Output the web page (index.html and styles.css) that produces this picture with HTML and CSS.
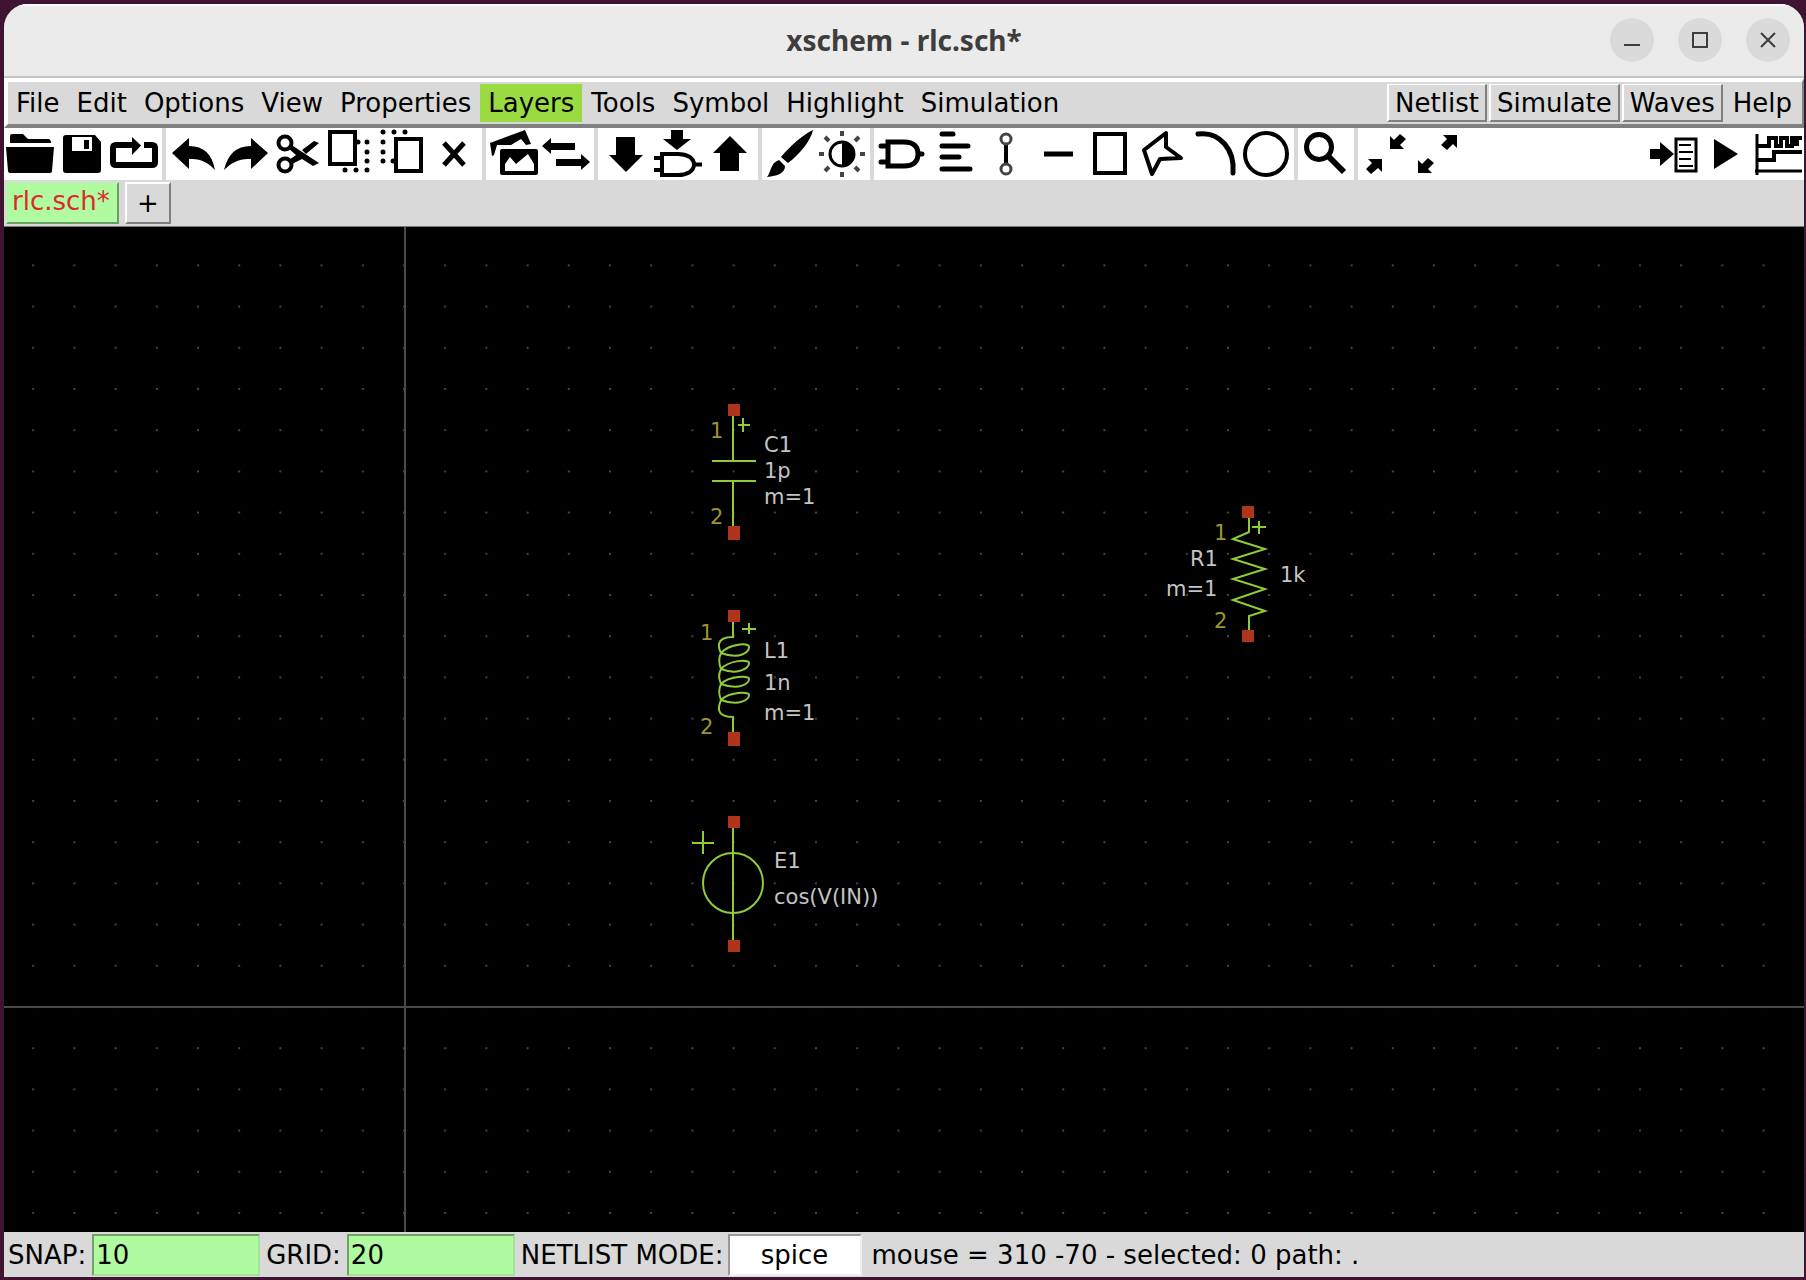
FILE: index.html
```html
<!DOCTYPE html>
<html lang="en">
<head>
<meta charset="utf-8">
<title>xschem - rlc.sch*</title>
<link rel="stylesheet" href="styles.css">
</head>
<body>
<div class="window">
  <header class="titlebar">
    <h1 class="title">xschem - rlc.sch*</h1>
    <div class="window-controls">
      <button class="wm" aria-label="Minimize"><svg viewBox="0 0 44 44"><path d="M14 27H30"/></svg></button>
      <button class="wm" aria-label="Maximize"><svg viewBox="0 0 44 44"><rect x="15" y="15" width="14" height="14"/></svg></button>
      <button class="wm" aria-label="Close"><svg viewBox="0 0 44 44"><path d="M15 15L29 29M29 15L15 29"/></svg></button>
    </div>
  </header>

  <nav class="menubar">
    <button class="menu">File</button>
    <button class="menu">Edit</button>
    <button class="menu">Options</button>
    <button class="menu">View</button>
    <button class="menu">Properties</button>
    <button class="menu active">Layers</button>
    <button class="menu">Tools</button>
    <button class="menu">Symbol</button>
    <button class="menu">Highlight</button>
    <button class="menu">Simulation</button>
    <div class="actions">
      <button class="menu raised">Netlist</button>
      <button class="menu raised">Simulate</button>
      <button class="menu raised">Waves</button>
      <button class="menu">Help</button>
    </div>
  </nav>

  <div class="toolbar">
    <div class="group">
      <button class="tool" aria-label="Open"><svg viewBox="0 0 52 52"><path class="f" d="M6 8q0-2 2-2h11l5 5h20q3 0 3 4H6zM2 19H50L48 43q0 2-2 2H6q-2 0-2-2z"/></svg></button>
      <button class="tool" aria-label="Save"><svg viewBox="0 0 52 52"><path class="f" fill-rule="evenodd" d="M10 7H39L45 14V42q0 3-3 3H10q-3 0-3-3V10q0-3 3-3zM16 9V23H36V9zM28 12h5v9h-5z"/></svg></button>
      <button class="tool" aria-label="Reload"><svg viewBox="0 0 52 52"><path class="s w6" d="M26 17H8q-3 0-3 3v14q0 3 3 3h36q3 0 3-3V20q0-3-3-3h-8"/><path class="f" d="M24 9L33 17.500 24 27z"/></svg></button>
    </div>
    <div class="group">
      <button class="tool" aria-label="Undo"><svg viewBox="0 0 52 52"><path class="f" d="M4 25L21 10V18C36 18 44 26 47 42 38 32 30 31 21 31V41z"/></svg></button>
      <button class="tool" aria-label="Redo"><svg viewBox="0 0 52 52"><path class="f" d="M48 25L31 10V18C16 18 8 26 4 42 14 32 22 31 31 31V41z"/></svg></button>
      <button class="tool" aria-label="Cut"><svg viewBox="0 0 52 52"><circle class="s w4" cx="13" cy="15" r="6.500"/><circle class="s w4" cx="13" cy="37" r="6.500"/><path class="f" d="M18 16L47 35 41 38 30 31 18 37 17 32 24 27 16 20zM30 22L42 13 47 15 34 26z"/></svg></button>
      <button class="tool" aria-label="Copy"><svg viewBox="0 0 52 52"><rect class="s w4" x="6" y="4" width="25" height="32"/><path class="dots" d="M34 14h0M43 14h0M43 24h0M43 33h0M43 42h0M32 42h0M21 42h0"/></svg></button>
      <button class="tool" aria-label="Paste"><svg viewBox="0 0 52 52"><rect class="s w4" x="20" y="11" width="25" height="32"/><path class="dots" d="M17 33h0M7 4h0M18 4h0M29 4h0M7 14h0M7 24h0M7 33h0"/></svg></button>
      <button class="tool" aria-label="Delete"><svg viewBox="0 0 52 52"><path class="s w5" d="M16 15L36 37M36 15L16 37"/></svg></button>
    </div>
    <div class="group">
      <button class="tool" aria-label="Merge images"><svg viewBox="0 0 52 52"><path class="f" fill-rule="evenodd" d="M2 15L37 2 43 16 38 17 33 11 23 17H9L6 27 4 28zM14 21H48q2 0 2 2V45q0 2-2 2H14q-2 0-2-2V23q0-2 2-2zM17 43H46V36L40 26 28 36 22 29 17 36z"/></svg></button>
      <button class="tool" aria-label="Swap"><svg viewBox="0 0 52 52"><path class="f" d="M2 18L11 10V15H35V22H11V26zM50 34L41 26V31H16V38H41V42z"/></svg></button>
    </div>
    <div class="group">
      <button class="tool" aria-label="Descend"><svg viewBox="0 0 52 52"><path class="f" d="M16 9H35V27H43L26 44 9 27H16z"/></svg></button>
      <button class="tool" aria-label="Insert symbol"><svg viewBox="0 0 52 52"><path class="f" d="M19 2H31V11H39L25 22 11 11H19z"/><path class="s w4" d="M10 26H26C35 26 42 30 42 36.500S35 47 26 47H10zM2 30H10M2 42H10M42 36.500H50"/></svg></button>
      <button class="tool" aria-label="Ascend"><svg viewBox="0 0 52 52"><path class="f" d="M16 43H35V25H43L26 8 9 25H16z"/></svg></button>
    </div>
    <div class="group">
      <button class="tool" aria-label="Highlight net"><svg viewBox="0 0 52 52"><path class="f" d="M49 2C47 12 36 26 24 35L17 29C27 17 40 6 49 2zM15 32L21 38C21 45 14 48 3 49 7 45 6 35 15 32z"/></svg></button>
      <button class="tool" aria-label="Toggle colour scheme"><svg viewBox="0 0 52 52"><circle class="s w3" cx="26" cy="26" r="12"/><path class="f" d="M26 14a12 12 0 0 1 0 24z"/><path class="s w4 gray" d="M26 3V8M26 44V49M3 26H8M44 26H49M9 9L13 13M39 39L43 43M43 9L39 13M9 43L13 39"/></svg></button>
    </div>
    <div class="group">
      <button class="tool" aria-label="Place symbol"><svg viewBox="0 0 52 52"><path class="s w5" d="M12 14H28C38 14 42 19 42 26S38 38 28 38H12zM5 18H10M5 34H10M43 26H46" stroke-linecap="round"/></svg></button>
      <button class="tool" aria-label="Place text"><svg viewBox="0 0 52 52"><path class="s w5" d="M14 6H25M14 18H40M14 29H31M14 41H42" stroke-linecap="round"/></svg></button>
      <button class="tool" aria-label="Draw wire"><svg viewBox="0 0 52 52"><path class="s w4" d="M26 16V36"/><circle class="s w3 gray" cx="26" cy="11" r="5"/><circle class="s w3 gray" cx="26" cy="41" r="5"/></svg></button>
      <button class="tool" aria-label="Draw line"><svg viewBox="0 0 52 52"><path class="s w5" d="M12 26H41"/></svg></button>
      <button class="tool" aria-label="Draw rectangle"><svg viewBox="0 0 52 52"><rect class="s w4" x="11" y="6" width="30" height="39"/></svg></button>
      <button class="tool" aria-label="Draw polygon"><svg viewBox="0 0 52 52"><path class="s w4" stroke-linejoin="round" d="M30 5L8 22 16 46 24 31 45 30 30 19z"/></svg></button>
      <button class="tool" aria-label="Draw arc"><svg viewBox="0 0 52 52"><path class="s w5" stroke-linecap="round" d="M10 6C32 3 47 22 45 45"/></svg></button>
      <button class="tool" aria-label="Draw circle"><svg viewBox="0 0 52 52"><circle class="s w4" cx="26" cy="26" r="21"/></svg></button>
    </div>
    <div class="group">
      <button class="tool" aria-label="Zoom box"><svg viewBox="0 0 52 52"><circle class="s w5" cx="19" cy="19" r="12.500"/><path class="s w6" d="M28 28L44 44"/></svg></button>
    </div>
    <div class="group">
      <button class="tool" aria-label="Zoom out"><svg viewBox="0 0 52 52"><path class="f" d="M30 21V8L34 12 40 6 46 11 40 17 44 21zM22 31V44L18 40 11 46 6 41 12 35 8 31z"/></svg></button>
      <button class="tool" aria-label="Zoom full"><svg viewBox="0 0 52 52"><path class="f" d="M45 7V20L41 16 35 22 29 17 35 11 31 7zM6 45V32L10 36 16 30 22 35 16 41 20 45z"/></svg></button>
    </div>
    <div class="group end">
      <button class="tool" aria-label="Netlist"><svg viewBox="0 0 52 52"><path class="f" d="M2 21H12V14L26 26 12 38V31H2z"/><rect class="s w3" x="28" y="11" width="20" height="32"/><path class="s w2" d="M31 17H43M31 24H45M31 31H43M31 38H45"/></svg></button>
      <button class="tool" aria-label="Simulate"><svg viewBox="0 0 52 52"><path class="f" d="M14 11L38 26 14 41z"/></svg></button>
      <button class="tool" aria-label="Waves"><svg viewBox="0 0 52 52"><path class="s w3" d="M5 6V47M3 43H50"/><path class="s w4" d="M5 18H17V10H24V18H29V10H35V18H40V10H45V18M44 18V10H50M5 32H22V24H50"/></svg></button>
    </div>
  </div>

  <div class="tabs">
    <button class="tab current">rlc.sch*</button>
    <button class="tab add">+</button>
  </div>

  <main class="canvas">
    <svg class="schematic" role="img" aria-label="Schematic rlc.sch">
      <defs>
        <pattern id="grid" x="399" y="779" width="41.200" height="41.200" patternUnits="userSpaceOnUse">
          <rect width="2" height="2" fill="#444"/>
        </pattern>
      </defs>
      <rect width="100%" height="100%" fill="url(#grid)"/>
      <path class="axis" d="M401 0V4000M0 780H9000"/>

      <g transform="translate(730 183)">
        <path class="sym" d="M-1 6V51M-22 51H22M-22 71H22M-1 71V116M4 15H16M9 8V22"/>
        <rect class="pin" x="-6" y="-6" width="12" height="12"/><rect class="pin" x="-6" y="116" width="12" height="14"/>
        <text class="num" x="-24" y="28">1</text><text class="num" x="-24" y="114">2</text>
        <text x="30" y="42">C1</text><text x="30" y="68">1p</text><text x="30" y="94">m=1</text>
      </g>

      <g transform="translate(730 389)">
        <path class="sym" d="M-1 6V21C-20 21-15 33-13 37M-13 37C-5 28 15 26 15 31S6 44-13 37M-13 37C-16 43-15 48-13 53M-13 53C-5 44 15 43 15 47S6 60-13 53M-13 53C-16 59-15 63-13 68M-13 68C-5 60 15 59 15 63S6 75-13 68M-13 68C-16 74-15 79-13 84M-13 84C-5 76 15 75 15 79S6 91-13 84M-13 84C-15 89-20 101-1 101V116M8 13H22M15 7V18"/>
        <rect class="pin" x="-6" y="-6" width="12" height="12"/><rect class="pin" x="-6" y="116" width="12" height="14"/>
        <text class="num" x="-34" y="24">1</text><text class="num" x="-34" y="118">2</text>
        <text x="30" y="42">L1</text><text x="30" y="74">1n</text><text x="30" y="104">m=1</text>
      </g>

      <g transform="translate(730 595)">
        <path class="sym" d="M-1 6V118M-42 21H-20M-31 9V32"/><circle class="sym" cx="-1" cy="61" r="30"/>
        <rect class="pin" x="-6" y="-6" width="12" height="12"/><rect class="pin" x="-6" y="118" width="12" height="12"/>
        <text x="40" y="46">E1</text><text x="40" y="82">cos(V(IN))</text>
      </g>

      <g transform="translate(1244 285)">
        <path class="sym" d="M1 6V20L-15 27 17 37-15 47 17 57-15 67 17 77-15 88 17 99 1 104V118M4 15H18M11 9V22"/>
        <rect class="pin" x="-6" y="-6" width="12" height="12"/><rect class="pin" x="-6" y="118" width="12" height="12"/>
        <text class="num" x="-34" y="28">1</text><text class="num" x="-34" y="116">2</text>
        <text x="-58" y="54">R1</text><text x="-82" y="84">m=1</text><text x="32" y="70">1k</text>
      </g>
    </svg>
  </main>

  <footer class="status">
    <label for="snap">SNAP:</label><input id="snap" class="entry" type="text" value="10">
    <label for="gridsize">GRID:</label><input id="gridsize" class="entry" type="text" value="20">
    <label for="mode">NETLIST MODE:</label><input id="mode" class="entry mode" type="text" value="spice">
    <output class="info">mouse = 310 -70 - selected: 0 path: .</output>
  </footer>
</div>
</body>
</html>
```
FILE: styles.css
```css
* { box-sizing: border-box; }

body {
  margin: 0;
  min-height: 100vh;
  display: flex;
  padding: 4px 2px 3px 4px;
  background: #3e1430;
  font-family: "DejaVu Sans", sans-serif;
  font-size: 26px;
  color: #000;
}

button, input {
  margin: 0;
  padding: 0;
  border: 0;
  border-radius: 0;
  background: none;
  font: inherit;
  color: inherit;
}

svg { display: block; }

.window {
  flex: 1;
  min-width: 0;
  display: flex;
  flex-direction: column;
  background: #d9d9d9;
  border-radius: 24px 24px 0 0;
  overflow: hidden;
}

/* Title bar */
.titlebar {
  display: grid;
  grid-template-columns: 1fr auto 1fr;
  align-items: center;
  height: 74px;
  padding-bottom: 2px;
  background: #ebebeb;
  border-top: 2px solid #fafafa;
  border-bottom: 2px solid #c4c4c4;
}

.title {
  grid-column: 2;
  margin: 0;
  font: bold 28px/36px "Noto Sans", "Open Sans", sans-serif;
  color: #3d3d3d;
}

.window-controls {
  display: flex;
  justify-content: flex-end;
  gap: 24px;
  padding-right: 14px;
}

.wm {
  width: 44px;
  height: 44px;
  border-radius: 50%;
  background: #dadada;
}

.wm path, .wm rect { fill: none; stroke: #3d3d3d; stroke-width: 2; }

/* Menu bar */
.menubar {
  display: flex;
  gap: 1px;
  height: 50px;
  padding: 2px 2px 1px 0;
  border: solid;
  border-width: 4px 2px 4px 4px;
  border-color: #fff #808080 #808080 #fff;
}

.menu {
  height: 38px;
  padding: 0 8px;
  line-height: 36px;
  white-space: nowrap;
}

.menu.active { background: #9adb41; }

.actions { display: flex; gap: 2px; margin-left: auto; }

.menu.raised {
  padding: 0 6px;
  border: 2px solid;
  border-color: #fff #808080 #808080 #fff;
  border-top-width: 1px;
  line-height: 34px;
}

/* Toolbar */
.toolbar { display: flex; background: #fff; }

.group { display: flex; }

.group + .group:not(.end)::before {
  content: "";
  width: 4px;
  margin: 0 2px;
  background: #d9d9d9;
}

.group.end { margin-left: auto; }

.tool { width: 52px; height: 52px; }

.f { fill: #000; }
.s { fill: none; stroke: #000; }
.s.gray { stroke: #444; }
.w2 { stroke-width: 2; }
.w3 { stroke-width: 3; }
.w4 { stroke-width: 4; }
.w5 { stroke-width: 5; }
.w6 { stroke-width: 6; }
.dots { stroke: #000; stroke-width: 5; stroke-linecap: round; }

/* Tabs */
.tabs {
  display: flex;
  gap: 6px;
  height: 46px;
  padding: 2px;
}

.tab {
  height: 42px;
  padding: 0 9px;
  border: 2px solid;
  border-color: #fff #808080 #808080 #fff;
  line-height: 34px;
}

.tab.current {
  padding: 0 7px 4px 4px;
  background: #b0faa0;
  border-color: #b8f5ac #6e9c65 #6e9c65 #b8f5ac;
  color: #dc2a2a;
}

.tab.add { width: 46px; }

/* Drawing area */
.canvas {
  flex: 1;
  display: flex;
  min-height: 400px;
  background: #000;
  border-top: 1px solid #777;
}

.schematic {
  flex: 1;
  width: 100%;
  height: auto;
  font-size: 21px;
  fill: #c4c4c4;
}

.axis { fill: none; stroke: #4a4a4a; stroke-width: 2; }
.sym { fill: none; stroke: #90cc38; stroke-width: 2; }
.pin { fill: #b0341a; }
.num { fill: #9c962c; }

/* Status bar */
.status {
  display: flex;
  align-items: center;
  height: 45px;
  padding-left: 4px;
  white-space: nowrap;
}

.entry {
  width: 168px;
  height: 42px;
  margin: 0 6px;
  padding: 0 2px;
  background: #b0faa0;
  border: 2px solid;
  border-color: #72a066 #a4e298 #a4e298 #72a066;
}

.entry.mode {
  width: 134px;
  margin: 0 4px;
  background: #fff;
  border-color: #999 #eee #eee #999;
  text-align: center;
}

.info { margin-left: 6px; }
```
